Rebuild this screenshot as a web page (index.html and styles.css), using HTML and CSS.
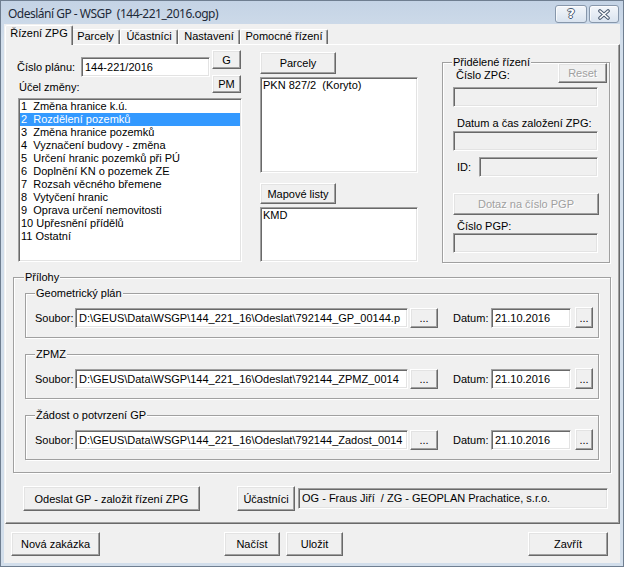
FILE: index.html
```html
<!DOCTYPE html>
<html lang="cs">
<head>
<meta charset="utf-8">
<title>Odeslání GP - WSGP</title>
<link rel="stylesheet" href="styles.css">
</head>
<body>
<div class="win">
  <div class="titlebar">
    <span class="title">Odeslání GP - WSGP  (144-221_2016.ogp)</span>
    <span class="tbtn help">?</span>
    <span class="tbtn close"><svg width="14" height="11" viewBox="0 0 14 11"><path d="M3 2 L11 9 M11 2 L3 9" stroke="#4a5a70" stroke-width="3.6" stroke-linecap="round" fill="none"/><path d="M3 2 L11 9 M11 2 L3 9" stroke="#fff" stroke-width="1.6" stroke-linecap="round" fill="none"/></svg></span>
  </div>
  <div class="client">
    <div class="tabs">
      <div class="tab active t1">Řízení ZPG</div>
      <div class="tab t2">Parcely</div>
      <div class="tab t3">Účastníci</div>
      <div class="tab t4">Nastavení</div>
      <div class="tab t5">Pomocné řízení</div>
    </div>
    <div class="panel">
      <div class="top">
        <div class="leftcol">
          <div class="planrow">
            <div class="planleft">
              <div class="field">
                <span class="lbl-plan">Číslo plánu:</span>
                <div class="input sunk in-plan">144-221/2016</div>
              </div>
              <div class="lbl-ucel">Účel změny:</div>
            </div>
            <div class="planbtns">
              <div class="btn btn-g">G</div>
              <div class="btn btn-pm">PM</div>
            </div>
          </div>
          <div class="listbox sunk lb-ucel">
            <div class="item">1  Změna hranice k.ú.</div>
            <div class="item sel">2  Rozdělení pozemků</div>
            <div class="item">3  Změna hranice pozemků</div>
            <div class="item">4  Vyznačení budovy - změna</div>
            <div class="item">5  Určení hranic pozemků při PÚ</div>
            <div class="item">6  Doplnění KN o pozemek ZE</div>
            <div class="item">7  Rozsah věcného břemene</div>
            <div class="item">8  Vytyčení hranic</div>
            <div class="item">9  Oprava určení nemovitosti</div>
            <div class="item">10 Upřesnění přídělů</div>
            <div class="item">11 Ostatní</div>
          </div>
        </div>
        <div class="midcol">
          <div class="btn btn-parcely">Parcely</div>
          <div class="listbox sunk lb-parc">
            <div class="item">PKN 827/2  (Koryto)</div>
          </div>
          <div class="btn btn-mapy">Mapové listy</div>
          <div class="listbox sunk lb-kmd">
            <div class="item">KMD</div>
          </div>
        </div>
        <fieldset class="group grp-r">
          <legend>Přidělené řízení</legend>
          <div class="r-row1">
            <span class="r-lbl r-zpg">Číslo ZPG:</span>
            <div class="btn dis btn-reset">Reset</div>
          </div>
          <div class="input sunk dis-in in-r1"></div>
          <div class="r-lbl r-datum">Datum a čas založení ZPG:</div>
          <div class="input sunk dis-in in-r2"></div>
          <div class="r-id">
            <span class="r-lbl id-lbl">ID:</span>
            <div class="input sunk dis-in in-id"></div>
          </div>
          <div class="btn dis btn-dotaz">Dotaz na číslo PGP</div>
          <div class="r-lbl r-pgp">Číslo PGP:</div>
          <div class="input sunk dis-in in-r4"></div>
        </fieldset>
      </div>
      <fieldset class="group grp-p">
        <legend>Přílohy</legend>
        <fieldset class="group grp-sub">
          <legend>Geometrický plán</legend>
          <div class="file-row">
            <span class="f-lbl">Soubor:</span>
            <div class="input sunk in-file">D:\GEUS\Data\WSGP\144_221_16\Odeslat\792144_GP_00144.p</div>
            <div class="btn btn-dots">...</div>
            <span class="d-lbl">Datum:</span>
            <div class="input sunk in-date">21.10.2016</div>
            <div class="btn btn-dots2">...</div>
          </div>
        </fieldset>
        <fieldset class="group grp-sub">
          <legend>ZPMZ</legend>
          <div class="file-row">
            <span class="f-lbl">Soubor:</span>
            <div class="input sunk in-file">D:\GEUS\Data\WSGP\144_221_16\Odeslat\792144_ZPMZ_0014</div>
            <div class="btn btn-dots">...</div>
            <span class="d-lbl">Datum:</span>
            <div class="input sunk in-date">21.10.2016</div>
            <div class="btn btn-dots2">...</div>
          </div>
        </fieldset>
        <fieldset class="group grp-sub">
          <legend>Žádost o potvrzení GP</legend>
          <div class="file-row">
            <span class="f-lbl">Soubor:</span>
            <div class="input sunk in-file">D:\GEUS\Data\WSGP\144_221_16\Odeslat\792144_Zadost_0014</div>
            <div class="btn btn-dots">...</div>
            <span class="d-lbl">Datum:</span>
            <div class="input sunk in-date">21.10.2016</div>
            <div class="btn btn-dots2">...</div>
          </div>
        </fieldset>
      </fieldset>
      <div class="actions">
        <div class="btn btn-odeslat">Odeslat GP - založit řízení ZPG</div>
        <div class="btn btn-ucast">Účastníci</div>
        <div class="input sunk dis-in in-ucast">OG - Fraus Jiří  / ZG - GEOPLAN Prachatice, s.r.o.</div>
      </div>
    </div>
    <div class="footer">
      <div class="btn btn-nova">Nová zakázka</div>
      <div class="btn btn-nacist">Načíst</div>
      <div class="btn btn-ulozit">Uložit</div>
      <div class="btn btn-zavrit">Zavřít</div>
    </div>
  </div>
</div>
</body>
</html>
```
FILE: styles.css
```css
* { box-sizing: border-box; }
html, body { margin: 0; padding: 0; }
body {
  width: 624px;
  height: 567px;
  overflow: hidden;
  font: 11px "Liberation Sans", Arial, sans-serif;
  color: #000;
  background: #cdd9e7;
}
.win {
  width: 624px;
  height: 567px;
  border: 1px solid #6f7e90;
  background: linear-gradient(#c4d3e5, #d2deeb 40px, #d2deeb);
  padding: 0 3px 3px 3px;
  display: flex;
  flex-direction: column;
}
.titlebar {
  height: 23px;
  display: flex;
  align-items: flex-start;
  padding-left: 4px;
  flex: none;
}
.title {
  flex: 1;
  margin-top: 5px;
  font: 12px "Noto Sans", "Liberation Sans", sans-serif;
  letter-spacing: -0.5px;
  line-height: 16px;
  color: #1e2a38;
  white-space: pre;
}
.tbtn {
  height: 18px;
  margin-top: 4px;
  border: 1px solid #8797ab;
  border-radius: 3px;
  background: linear-gradient(#f3f6fa, #d9e3ef);
  box-shadow: inset 1px 1px 0 rgba(255,255,255,0.7);
  display: flex;
  align-items: center;
  justify-content: center;
}
.help {
  width: 32px;
  font: bold 13px "DejaVu Sans", sans-serif;
  color: #fff;
  line-height: 14px;
  text-shadow: 1px 0 #4a5a70, -1px 0 #4a5a70, 0 1px #4a5a70, 0 -1px #4a5a70;
}
.close { width: 30px; margin-left: 2px; margin-right: 1px; }

.client {
  flex: 1;
  background: #f0f0f0;
  display: flex;
  flex-direction: column;
}

/* tabs */
.tabs {
  height: 20px;
  display: flex;
  align-items: flex-end;
  padding-left: 3px;
  flex: none;
}
.tab {
  height: 15px;
  border: 1px solid;
  border-bottom: 0;
  border-color: #fff #696969 transparent #fff;
  box-shadow: inset -1px 0 #a0a0a0;
  border-radius: 2px 2px 0 0;
  text-align: center;
  line-height: 13px;
  white-space: nowrap;
}
.tab.active {
  height: 20px;
  margin: 0 -2px -1px -2px;
  padding-top: 1px;
  position: relative;
  z-index: 1;
  background: #f0f0f0;
}
.t1 { width: 68px; }
.t2 { width: 49px; }
.t3 { width: 58px; }
.t4 { width: 62px; }
.t5 { width: 88px; }

/* panel */
.panel {
  margin-left: 1px;
  width: 615px;
  height: 480px;
  flex: none;
  border: 1px solid;
  border-color: #fff #696969 #696969 #fff;
  box-shadow: inset -1px -1px #a0a0a0;
}
.top {
  display: flex;
  align-items: flex-start;
  margin: 5px 0 0 10px;
  height: 212px;
}

/* common controls */
.sunk {
  border: 1px solid;
  border-color: #a0a0a0 #fff #fff #a0a0a0;
  box-shadow: inset 1px 1px #696969, inset -1px -1px #e3e3e3;
  background: #fff;
}
.input {
  height: 20px;
  padding: 0 3px;
  line-height: 18px;
  white-space: pre;
  overflow: hidden;
  flex: none;
}
.dis-in { background: #f0f0f0; }
.btn {
  display: flex;
  align-items: center;
  justify-content: center;
  border: 1px solid;
  border-color: #fff #696969 #696969 #fff;
  box-shadow: inset -1px -1px #a0a0a0, inset 1px 1px #e3e3e3;
  background: #f0f0f0;
  white-space: nowrap;
  flex: none;
}
.btn.dis { color: #a0a0a0; text-shadow: 1px 1px #fff; }

.listbox {
  padding: 1px;
  overflow: hidden;
}
.item {
  height: 13px;
  line-height: 13px;
  padding-left: 1px;
  white-space: pre;
}
.item.sel { background: #3399ff; color: #fff; }

/* left column */
.leftcol { width: 226px; flex: none; }
.planrow { display: flex; }
.planleft { width: 196px; }
.field { display: flex; align-items: center; margin-top: 7px; }
.lbl-plan { width: 65px; padding-left: 1px; }
.in-plan { width: 129px; }
.lbl-ucel { margin-top: 4px; padding-left: 3px; line-height: 13px; }
.planbtns { width: 29px; }
.btn-g { height: 19px; }
.btn-pm { height: 18px; margin-top: 6px; }
.lb-ucel { margin: 4px 0 0 2px; width: 224px; height: 164px; }

/* middle column */
.midcol { width: 159px; margin-left: 18px; flex: none; }
.btn-parcely { width: 76px; height: 22px; margin-top: 2px; }
.lb-parc { margin-top: 3px; width: 158px; height: 96px; }
.btn-mapy { width: 76px; height: 21px; margin-top: 10px; }
.lb-kmd { margin-top: 3px; width: 158px; height: 55px; }

/* group boxes */
.group {
  border: 1px solid #a0a0a0;
  box-shadow: inset 1px 1px #fff, 1px 1px #fff;
  margin: 0;
  min-width: 0;
  padding: 0;
}
.group > legend {
  padding: 0 1px;
  line-height: 13px;
  background: #f0f0f0;
  white-space: nowrap;
}

/* right group */
.grp-r {
  margin: 6px 0 0 23px;
  width: 168px;
  height: 207px;
  padding: 0 2px 0 10px;
  flex: none;
}
.grp-r > legend { margin-left: -1px; }
.r-row1 {
  display: flex;
  align-items: flex-start;
  justify-content: space-between;
  margin-top: -6px;
  height: 20px;
}
.r-lbl { line-height: 13px; padding-left: 3px; }
.r-row1 .r-zpg { margin-top: 6px; }
.btn-reset { width: 49px; height: 20px; }
.in-r1, .in-r2, .in-r4 { width: 145px; }
.in-r1 { margin-top: 4px; }
.r-datum { margin-top: 10px; padding-left: 4px; }
.in-r2 { margin-top: 1px; }
.r-id { display: flex; align-items: center; margin-top: 6px; }
.id-lbl { width: 26px; padding-left: 4px; }
.in-id { width: 119px; }
.btn-dotaz { width: 146px; height: 22px; margin-top: 16px; }
.r-pgp { margin-top: 5px; padding-left: 4px; }

/* attachments */
.grp-p {
  margin: 9px 0 0 7px;
  width: 598px;
  height: 202px;
  padding: 0 0 0 11px;
}
.grp-p > legend { margin-left: -1px; }
.grp-sub {
  width: 574px;
  height: 51px;
  padding: 0 0 0 9px;
  margin-top: 3px;
}
.grp-sub + .grp-sub { margin-top: 10px; }
.file-row {
  display: flex;
  align-items: center;
  margin-top: 7px;
  height: 21px;
}
.f-lbl { width: 40px; }
.in-file { width: 333px; }
.btn-dots { width: 28px; height: 20px; margin-left: 2px; }
.d-lbl { width: 38px; margin-left: 15px; }
.in-date { width: 80px; }
.btn-dots2 { width: 18px; height: 21px; margin-left: 4px; }

/* panel bottom row */
.actions {
  display: flex;
  align-items: center;
  margin: 13px 0 0 17px;
}
.btn-odeslat { width: 177px; height: 25px; }
.btn-ucast { width: 58px; height: 25px; margin-left: 37px; }
.in-ucast { width: 310px; height: 21px; margin-left: 3px; line-height: 19px; }

/* footer */
.footer {
  display: flex;
  align-items: flex-start;
  padding: 8px 12px 0 7px;
}
.footer .btn { height: 24px; }
.btn-nova { width: 89px; }
.btn-nacist { width: 56px; margin-left: 124px; }
.btn-ulozit { width: 57px; margin-left: 6px; }
.btn-zavrit { width: 80px; margin-left: auto; }
```
